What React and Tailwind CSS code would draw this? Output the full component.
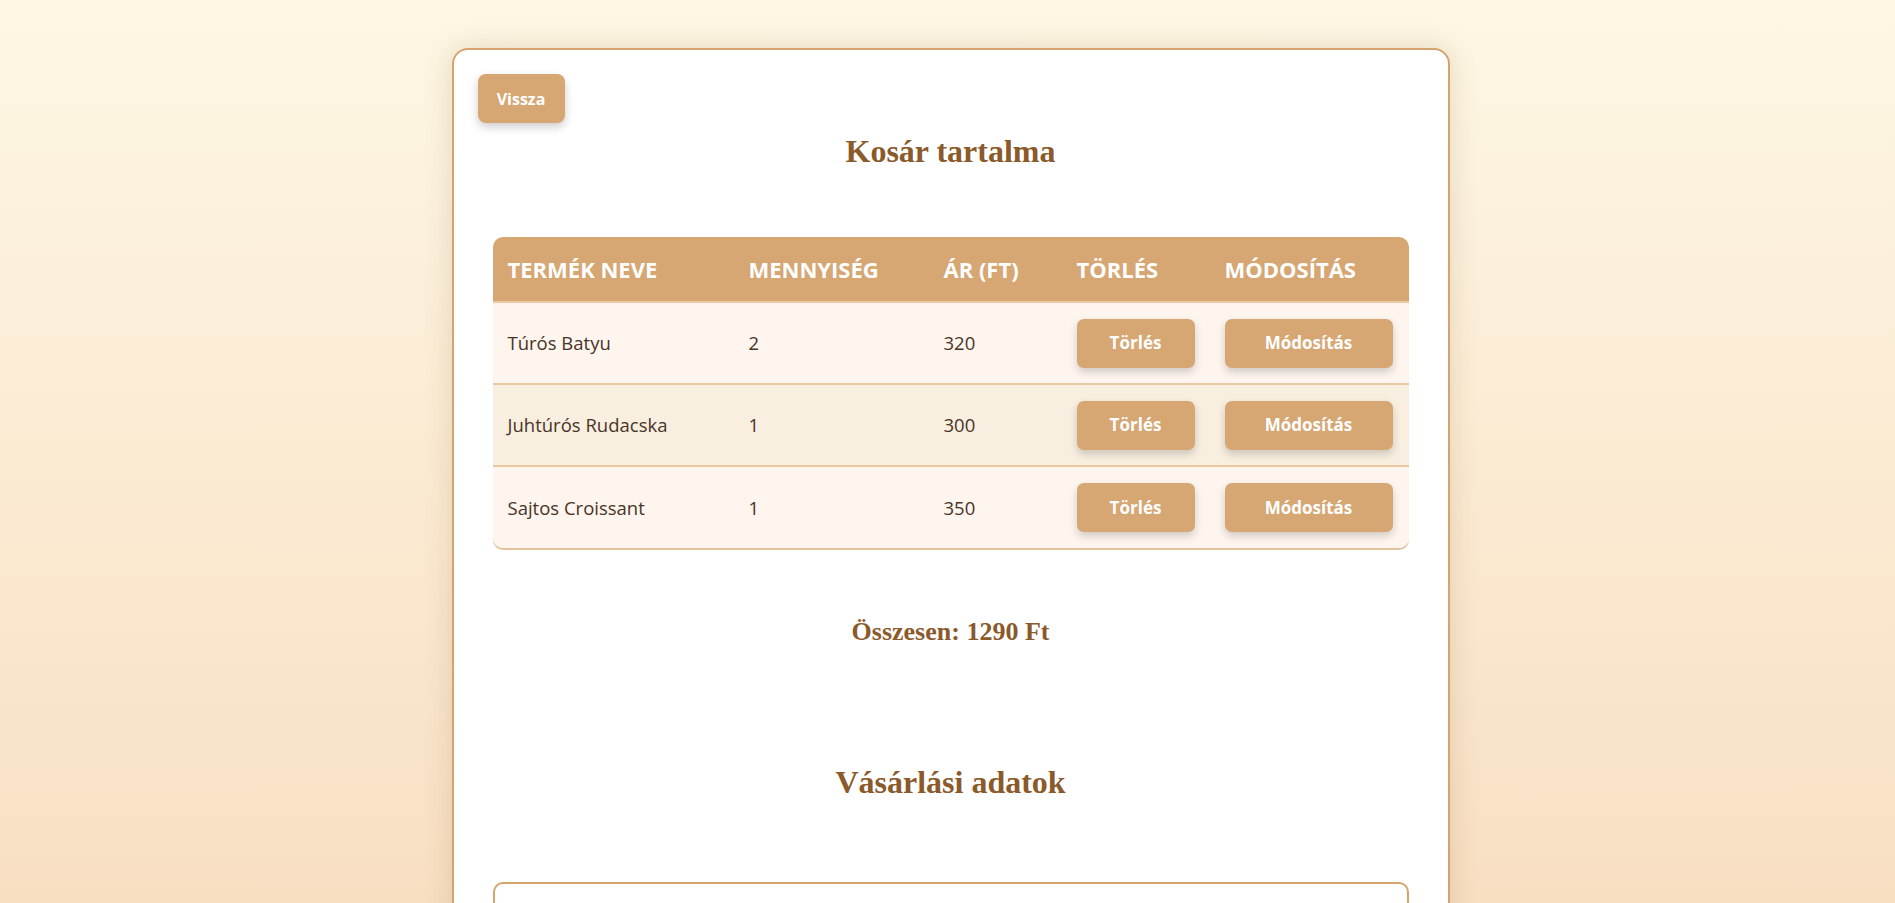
import React from 'react';

const items = [
    { id: 1, name: 'Túrós Batyu', qty: 2, price: 320 },
    { id: 2, name: 'Juhtúrós Rudacska', qty: 1, price: 300 },
    { id: 3, name: 'Sajtos Croissant', qty: 1, price: 350 },
];

const sans = { fontFamily: '"Open Sans", "Noto Sans", sans-serif' };

const App = () => {
    const total = items.reduce((sum, item) => sum + item.qty * item.price, 0);

    return (
        <div
            className="min-h-screen bg-fixed bg-gradient-to-b from-[#fdf7e4] to-[#f8dfc2] pt-12 pb-12 pl-[6px]"
            style={sans}
        >
            <div className="w-[998px] mx-auto bg-white border-2 border-[#d6a36f] rounded-[16px] p-6 shadow-[0_0_28px_rgba(120,90,40,0.18)]">
                <button className="w-[87px] h-[49px] rounded-[8px] bg-[#d6a673] text-white text-[16px] font-bold shadow-[0_4px_10px_rgba(0,0,0,0.2)]">
                    Vissza
                </button>

                <h1 className="mt-[10px] text-center text-[32px] leading-[37px] font-bold text-[#8b5a2b] font-['Liberation_Serif',serif]">
                    Kosár tartalma
                </h1>

                <div className="mx-[15px] mt-[67px] rounded-[10px] overflow-hidden shadow-[0_2px_0_#e3c29c]">
                    <table className="w-full table-fixed border-collapse">
                        <colgroup>
                            <col className="w-[241px]" />
                            <col className="w-[195px]" />
                            <col className="w-[133px]" />
                            <col className="w-[148px]" />
                            <col className="w-[199px]" />
                        </colgroup>
                        <thead>
                            <tr className="bg-[#d6a673] text-white text-left border-b-2 border-[#e8c9a2]">
                                <th className="h-[65px] pl-[15px] text-[22px] font-bold uppercase">Termék neve</th>
                                <th className="pl-[15px] text-[22px] font-bold uppercase">Mennyiség</th>
                                <th className="pl-[15px] text-[22px] font-bold uppercase">Ár (Ft)</th>
                                <th className="pl-[15px] text-[22px] font-bold uppercase">Törlés</th>
                                <th className="pl-[15px] text-[22px] font-bold uppercase">Módosítás</th>
                            </tr>
                        </thead>
                        <tbody>
                            {items.map((item, i) => (
                                <tr
                                    key={item.id}
                                    className={`${i % 2 === 1 ? 'bg-[#f8efe0]' : 'bg-[#fdf5ee]'} ${i < items.length - 1 ? 'border-b-2 border-[#e8c9a2]' : ''} text-[#4a3426] text-[18.5px]`}
                                >
                                    <td className="h-[82px] pl-[15px]">{item.name}</td>
                                    <td className="pl-[15px]">{item.qty}</td>
                                    <td className="pl-[15px]">{item.price}</td>
                                    <td className="pl-[15px]">
                                        <button className="w-[118px] h-[49px] rounded-[7px] bg-[#d6a673] text-white text-[17px] font-bold shadow-[0_4px_8px_rgba(0,0,0,0.18)]">
                                            Törlés
                                        </button>
                                    </td>
                                    <td className="pl-[15px]">
                                        <button className="w-[168px] h-[49px] rounded-[7px] bg-[#d6a673] text-white text-[17px] font-bold shadow-[0_4px_8px_rgba(0,0,0,0.18)]">
                                            Módosítás
                                        </button>
                                    </td>
                                </tr>
                            ))}
                        </tbody>
                    </table>
                </div>

                <h3 className="mt-[69px] text-center text-[26px] leading-[30px] font-bold text-[#8b5a2b] font-['Liberation_Serif',serif]">
                    Összesen: {total} Ft
                </h3>

                <h2 className="mt-[117px] text-center text-[32px] leading-[37px] font-bold text-[#8b5a2b] font-['Liberation_Serif',serif]">
                    Vásárlási adatok
                </h2>

                <form className="mx-[15px] mt-[81px] border-2 border-[#d6a36b] rounded-[10px] px-[17px] pt-[16px] pb-6 flex flex-col gap-3">
                    <label className="text-[17px] text-[#2f3440]">Név:</label>
                    <input className="h-[44px] border border-[#d6a36b] rounded-[6px] px-3" />
                    <label className="text-[17px] text-[#2f3440]">Cím:</label>
                    <input className="h-[44px] border border-[#d6a36b] rounded-[6px] px-3" />
                    <label className="text-[17px] text-[#2f3440]">Telefonszám:</label>
                    <input className="h-[44px] border border-[#d6a36b] rounded-[6px] px-3" />
                </form>
            </div>
        </div>
    );
};

export default App;
